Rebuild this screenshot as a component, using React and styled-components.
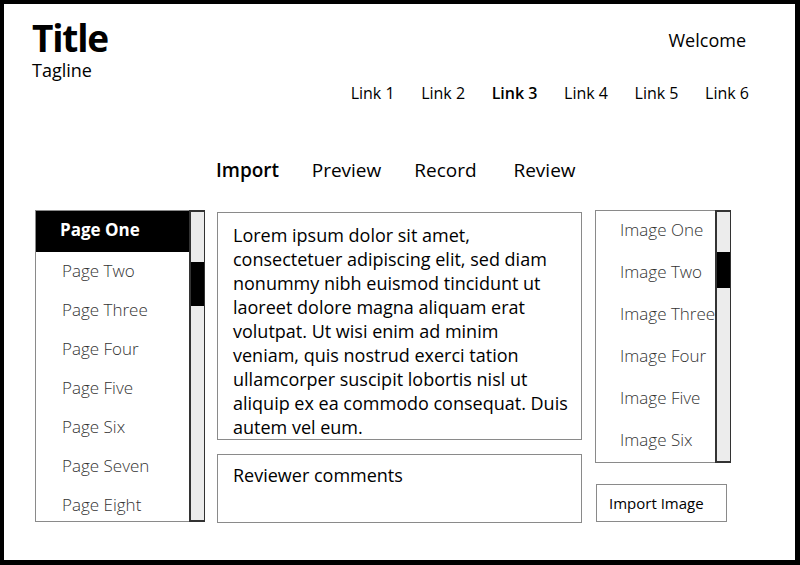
import React from "react";
import styled, { createGlobalStyle } from "styled-components";

const GlobalStyle = createGlobalStyle`
  html, body {
    margin: 0;
    padding: 0;
    background: #fff;
  }
  body {
    font-family: "Open Sans", "Noto Sans", sans-serif;
    color: #000;
  }
  * {
    box-sizing: border-box;
  }
`;

const pages = [
  "Page One",
  "Page Two",
  "Page Three",
  "Page Four",
  "Page Five",
  "Page Six",
  "Page Seven",
  "Page Eight",
];

const images = [
  "Image One",
  "Image Two",
  "Image Three",
  "Image Four",
  "Image Five",
  "Image Six",
];

const links = ["Link 1", "Link 2", "Link 3", "Link 4", "Link 5", "Link 6"];
const tabs = ["Import", "Preview", "Record", "Review"];

const lorem = [
  "Lorem ipsum dolor sit amet,",
  "consectetuer adipiscing elit, sed diam",
  "nonummy nibh euismod tincidunt ut",
  "laoreet dolore magna aliquam erat",
  "volutpat. Ut wisi enim ad minim",
  "veniam, quis nostrud exerci tation",
  "ullamcorper suscipit lobortis nisl ut",
  "aliquip ex ea commodo consequat. Duis",
  "autem vel eum.",
];

const App = () => {
  return (
    <>
      <GlobalStyle />
      <Frame>
        <Header>
          <Brand>
            <Title>Title</Title>
            <Tagline>Tagline</Tagline>
          </Brand>
          <UserArea>
            <Welcome>Welcome</Welcome>
            <Links>
              {links.map((l) => (
                <NavLink key={l} active={l === "Link 3"}>
                  {l}
                </NavLink>
              ))}
            </Links>
          </UserArea>
        </Header>

        <Tabs>
          {tabs.map((t) => (
            <Tab key={t} active={t === "Import"}>
              {t}
            </Tab>
          ))}
        </Tabs>

        <Main>
          <ListWrap height={312}>
            <List>
              {pages.map((p, i) => (
                <PageItem key={p} selected={i === 0} first={i === 0}>
                  {p}
                </PageItem>
              ))}
            </List>
            <Scrollbar>
              <Thumb top={50} size={44} />
            </Scrollbar>
          </ListWrap>

          <Center>
            <TextBox>
              {lorem.map((line) => (
                <Line key={line}>{line}</Line>
              ))}
            </TextBox>
            <Comments>Reviewer comments</Comments>
          </Center>

          <Side>
            <ListWrap height={253}>
              <List>
                {images.map((img) => (
                  <ImageItem key={img}>{img}</ImageItem>
                ))}
              </List>
              <Scrollbar>
                <Thumb top={40} size={36} />
              </Scrollbar>
            </ListWrap>
            <ImportButton>Import Image</ImportButton>
          </Side>
        </Main>
      </Frame>
    </>
  );
};

export default App;

const Frame = styled.div`
  width: 800px;
  height: 565px;
  border: solid #000;
  border-width: 4px 5px 5px 4px;
  overflow: hidden;
`;

const Header = styled.header`
  display: flex;
  justify-content: space-between;
  padding: 14px 46px 0 28px;
  height: 154px;
`;

const Brand = styled.div`
  display: flex;
  flex-direction: column;
`;

const Title = styled.h1`
  margin: 0;
  font-size: 37px;
  font-weight: 700;
  line-height: 40px;
  letter-spacing: -1.2px;
`;

const Tagline = styled.div`
  font-size: 18px;
  line-height: 22px;
  margin-top: 1px;
`;

const UserArea = styled.div`
  display: flex;
  flex-direction: column;
  align-items: flex-end;
  padding-top: 10px;
`;

const Welcome = styled.div`
  font-size: 18px;
  line-height: 24px;
  margin-right: 3px;
`;

const Links = styled.nav`
  display: flex;
  gap: 26.6px;
  margin-top: 31px;
`;

const NavLink = styled.a`
  font-size: 16px;
  line-height: 20px;
  font-weight: ${(p) => (p.active ? 600 : 400)};
  color: #000;
  text-decoration: none;
`;

const Tabs = styled.div`
  display: grid;
  grid-template-columns: repeat(4, 99px);
  margin-left: 194px;
  height: 52px;
`;

const Tab = styled.div`
  text-align: center;
  font-size: 19px;
  line-height: 24px;
  font-weight: ${(p) => (p.active ? 600 : 400)};
`;

const Main = styled.div`
  display: grid;
  grid-template-columns: 170px 365px 176px;
  column-gap: 12px;
  padding-left: 31px;
  align-items: start;
`;

const ListWrap = styled.div`
  display: flex;
  height: ${(p) => p.height}px;
`;

const List = styled.div`
  flex: 1;
  border: 1px solid #8a8a8a;
  border-right: none;
  overflow: hidden;
`;

const PageItem = styled.div`
  height: ${(p) => (p.first ? 42 : 39)}px;
  display: flex;
  align-items: center;
  padding-left: ${(p) => (p.selected ? 25 : 26)}px;
  padding-bottom: ${(p) => (p.selected ? 3 : 3)}px;
  margin: ${(p) => (p.selected ? "-1px -1px 0" : 0)};
  background: ${(p) => (p.selected ? "#000" : "transparent")};
  color: ${(p) => (p.selected ? "#fff" : "#333")};
  font-size: 17px;
  font-weight: ${(p) => (p.selected ? 700 : 300)};
`;

const ImageItem = styled.div`
  height: 42px;
  display: flex;
  align-items: center;
  padding-left: 24px;
  padding-bottom: 5px;
  color: #333;
  font-size: 17px;
  font-weight: 300;
`;

const Scrollbar = styled.div`
  position: relative;
  width: 16px;
  background: #ececec;
  border: 2px solid #333;
  border-right-width: 1.5px;
`;

const Thumb = styled.div`
  position: absolute;
  left: 0;
  right: 0;
  top: ${(p) => p.top}px;
  height: ${(p) => p.size}px;
  background: #000;
`;

const Center = styled.div`
  display: flex;
  flex-direction: column;
  gap: 14px;
  margin-top: 2px;
`;

const TextBox = styled.div`
  height: 228px;
  border: 1px solid #8a8a8a;
  padding: 10px 0 0 15px;
  font-size: 18px;
  line-height: 24px;
`;

const Line = styled.div`
  white-space: nowrap;
`;

const Comments = styled.div`
  height: 69px;
  border: 1px solid #8a8a8a;
  padding: 8px 0 0 15px;
  font-size: 18px;
  line-height: 24px;
`;

const Side = styled.div`
  display: flex;
  flex-direction: column;
  align-items: flex-start;
  margin-left: 1px;
`;

const ImportButton = styled.button`
  margin-top: 21px;
  margin-left: 1px;
  width: 131px;
  height: 38px;
  border: 1px solid #8a8a8a;
  background: #fff;
  text-align: left;
  padding: 0 0 0 12px;
  font-family: inherit;
  font-size: 15px;
  color: #000;
`;
